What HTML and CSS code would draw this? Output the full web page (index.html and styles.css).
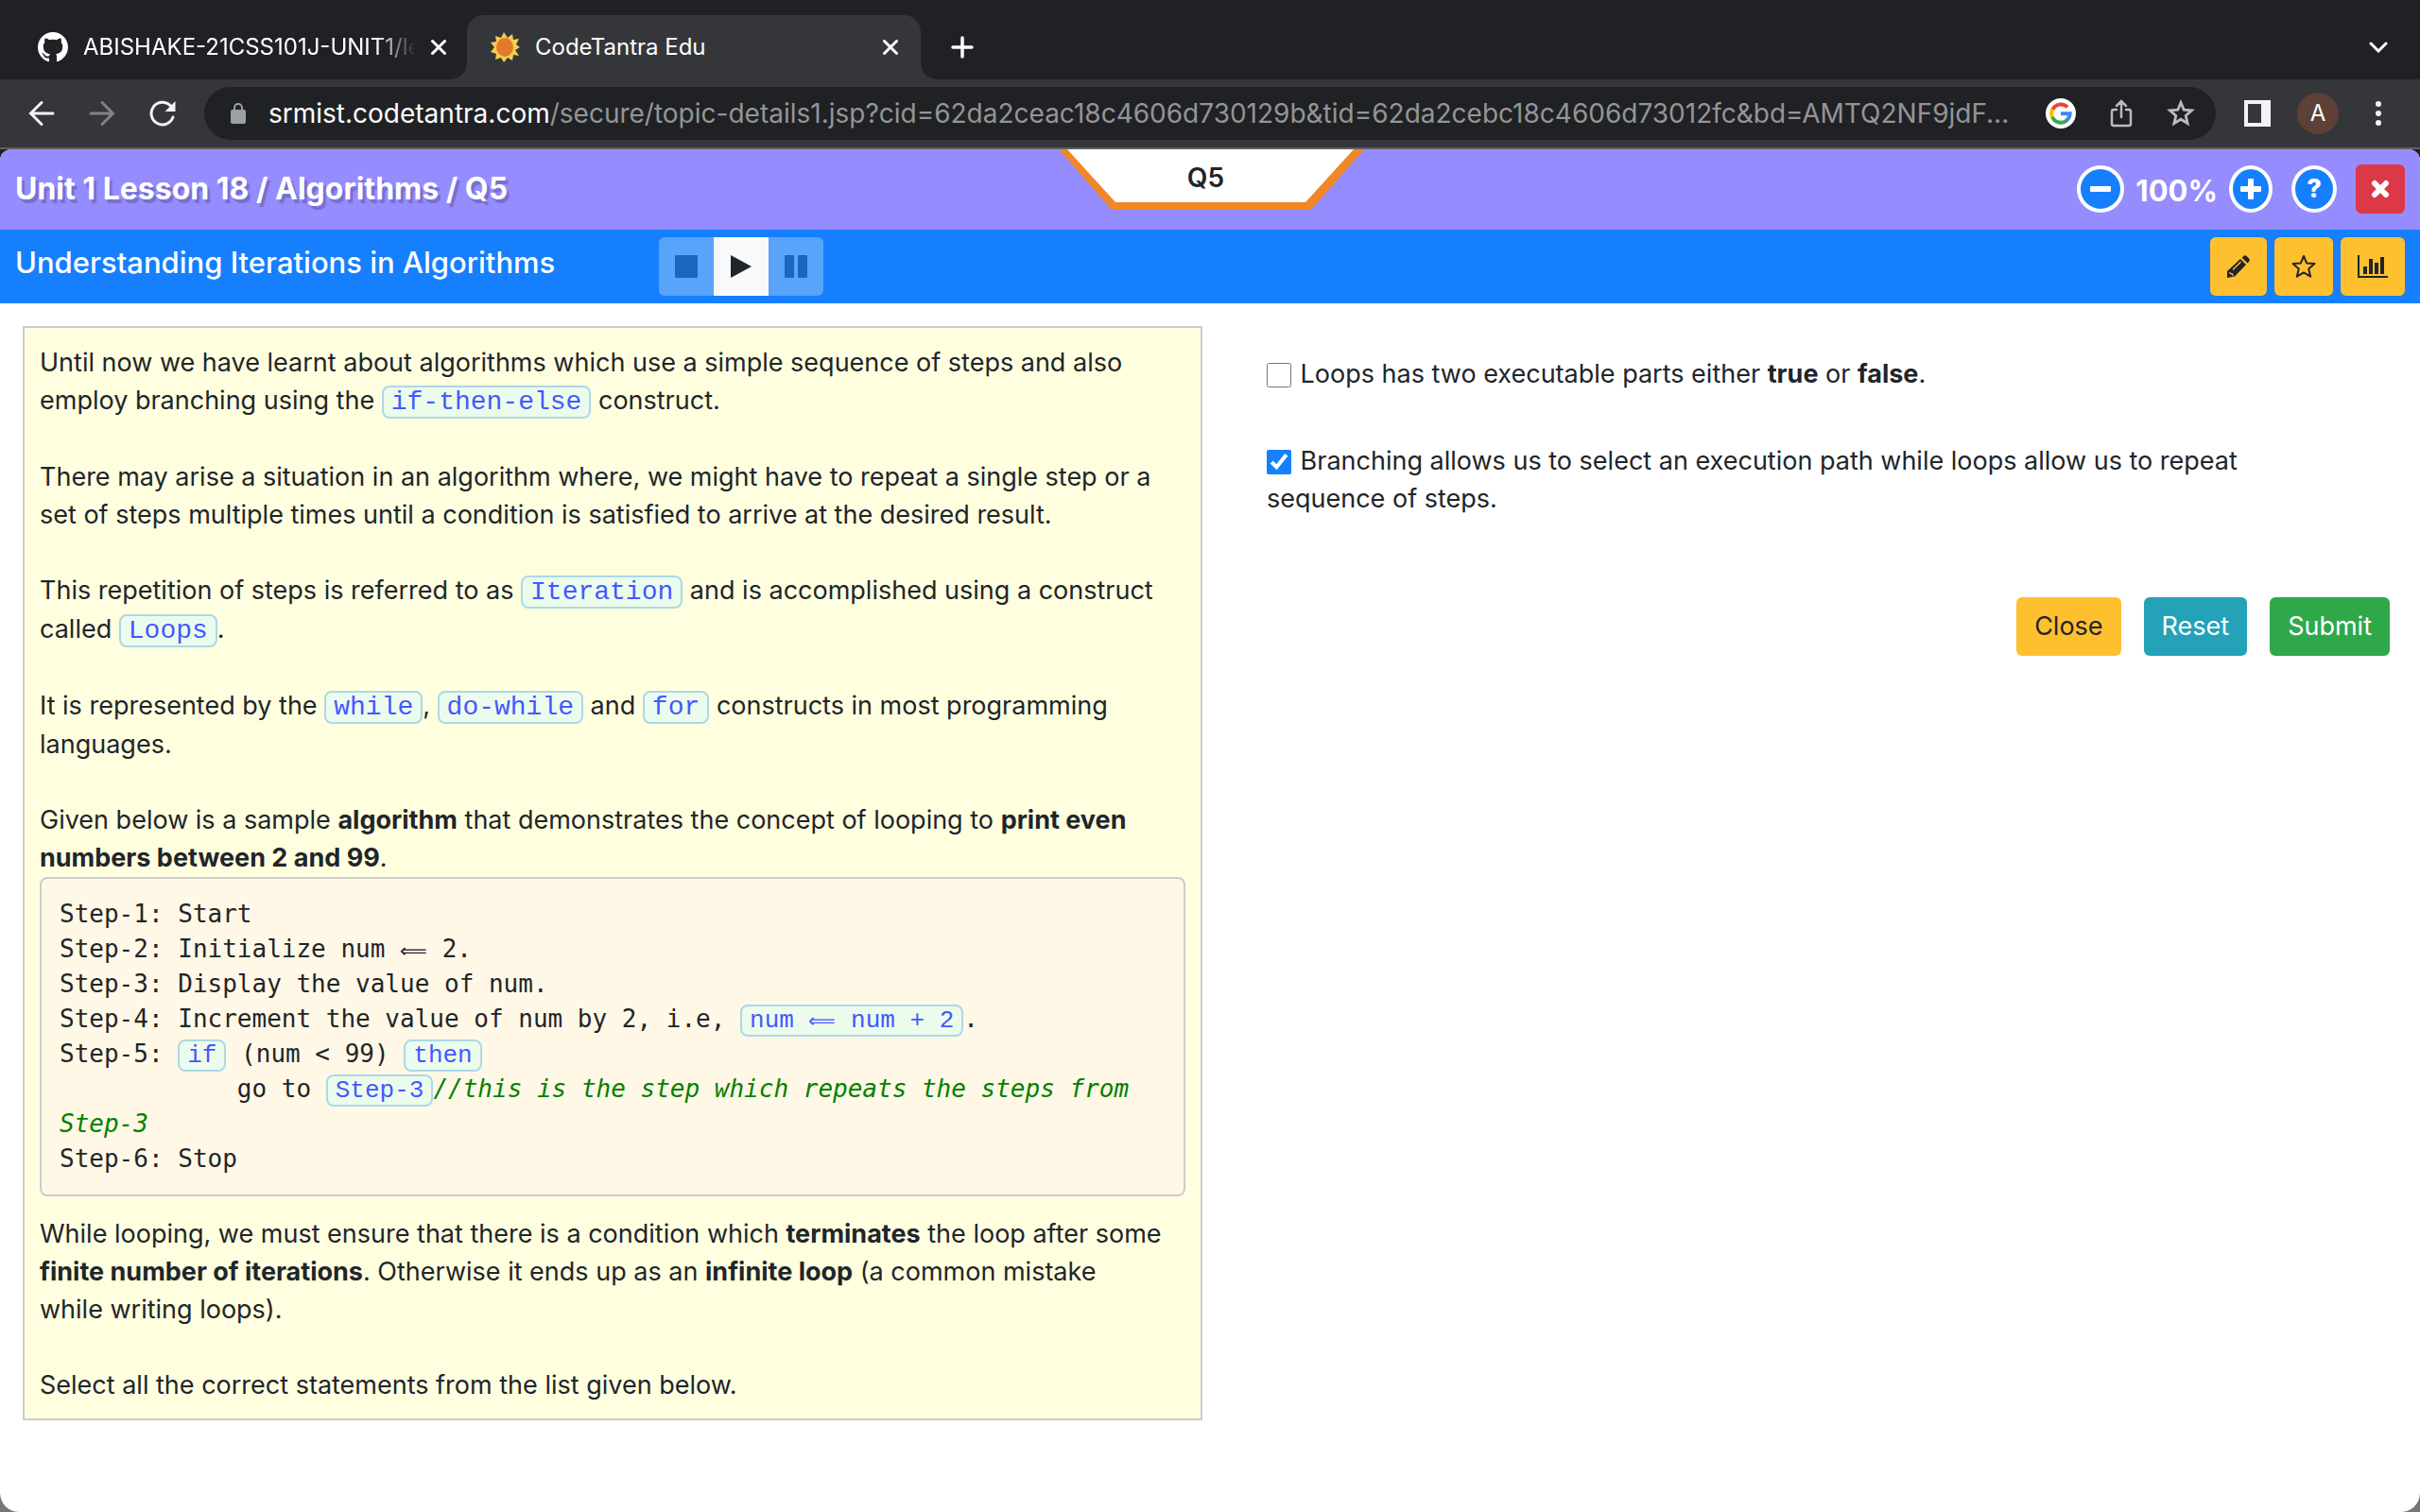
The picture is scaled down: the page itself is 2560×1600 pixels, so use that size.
FILE: index.html
```html
<!DOCTYPE html>
<html lang="en">
<head>
<meta charset="utf-8">
<title>CodeTantra Edu</title>
<link rel="stylesheet" href="styles.css">
</head>
<body>
<div class="window">
  <header class="browser">
    <nav class="tabs" aria-label="Tabs">
      <div class="tab">
        <svg class="favicon" viewBox="0 0 16 16" fill="#fff" aria-hidden="true"><path d="M8 0C3.58 0 0 3.58 0 8c0 3.54 2.29 6.53 5.47 7.59.4.07.55-.17.55-.38 0-.19-.01-.82-.01-1.49-2.01.37-2.53-.49-2.69-.94-.09-.23-.48-.94-.82-1.13-.28-.15-.68-.52-.01-.53.63-.01 1.08.58 1.23.82.72 1.21 1.87.87 2.33.66.07-.52.28-.87.51-1.07-1.78-.2-3.64-.89-3.64-3.95 0-.87.31-1.59.82-2.15-.08-.2-.36-1.02.08-2.12 0 0 .67-.21 2.2.82.64-.18 1.32-.27 2-.27s1.36.09 2 .27c1.53-1.04 2.2-.82 2.2-.82.44 1.1.16 1.92.08 2.12.51.56.82 1.27.82 2.15 0 3.07-1.87 3.75-3.65 3.95.29.25.54.73.54 1.48 0 1.07-.01 1.93-.01 2.2 0 .21.15.46.55.38A8.01 8.01 0 0 0 16 8c0-4.42-3.58-8-8-8z"/></svg>
        <span class="tab-title tab-title-faded">ABISHAKE-21CSS101J-UNIT1/le</span>
        <button class="icon-button" aria-label="Close tab"><svg width="16" height="16" viewBox="0 0 16 16" stroke="#fff" stroke-width="3" stroke-linecap="round"><path d="M1.500 1.500l13 13M14.500 1.500l-13 13"/></svg></button>
      </div>
      <div class="tab tab-active">
        <svg class="favicon" viewBox="0 0 32 32" aria-hidden="true"><path fill="#f3d04e" d="M15 0l4 6 5-4 1 6 6-1-3 6 4 3-5 3 4 6-6-1-1 6-5-3-4 5-3-5-6 2 1-6-6-2 4-5-4-5 6-1-1-6 6 2z"/><ellipse cx="16" cy="16" rx="9" ry="10" fill="#e5792b"/></svg>
        <span class="tab-title">CodeTantra Edu</span>
        <button class="icon-button" aria-label="Close tab"><svg width="16" height="16" viewBox="0 0 16 16" stroke="#fff" stroke-width="3" stroke-linecap="round"><path d="M1.500 1.500l13 13M14.500 1.500l-13 13"/></svg></button>
      </div>
      <button class="icon-button new-tab" aria-label="New tab"><svg width="24" height="24" viewBox="0 0 24 24" stroke="#fff" stroke-width="3.500" stroke-linecap="round"><path d="M12 2v20M2 12h20"/></svg></button>
      <button class="icon-button tab-search" aria-label="Search tabs"><svg width="20" height="12" viewBox="0 0 20 12" fill="none" stroke="#fff" stroke-width="3" stroke-linecap="round"><path d="M2 2l8 8 8-8"/></svg></button>
    </nav>
    <div class="toolbar">
      <div class="nav-buttons">
        <button class="icon-button" aria-label="Back"><svg width="28" height="28" viewBox="0 0 28 28" fill="none" stroke="#f1f3f4" stroke-width="3" stroke-linecap="round"><path d="M26 14H3M14 2.500L2.500 14 14 25.500"/></svg></button>
        <button class="icon-button" aria-label="Forward"><svg width="28" height="28" viewBox="0 0 28 28" fill="none" stroke="#828385" stroke-width="3" stroke-linecap="round"><path d="M2 14h23M14 2.500L25.500 14 14 25.500"/></svg></button>
        <button class="icon-button" aria-label="Reload"><svg width="28" height="28" viewBox="0 0 28 28"><path fill="none" stroke="#f1f3f4" stroke-width="3" stroke-linecap="round" d="M25 18A11.800 11.800 0 1 1 22 5.500"/><path fill="#f1f3f4" d="M27.500 1v11H16.500z"/></svg></button>
      </div>
      <div class="address">
        <svg width="16" height="22" viewBox="0 0 16 22" aria-hidden="true"><rect y="7" width="16" height="15" rx="2" fill="#9aa0a6"/><path d="M4 8V5a4 4 0 0 1 8 0v3" fill="none" stroke="#9aa0a6" stroke-width="2"/></svg>
        <span class="url"><span class="url-host">srmist.codetantra.com</span>/secure/topic-details1.jsp?cid=62da2ceac18c4606d730129b&amp;tid=62da2cebc18c4606d73012fc&amp;bd=AMTQ2NF9jdF...</span>
        <button class="icon-button" aria-label="Google"><svg width="32" height="32" viewBox="0 0 32 32" fill="none" stroke-width="4"><circle cx="16" cy="16" r="16" fill="#fff"/><path stroke="#ea4335" d="M7.300 12A9.700 9.700 0 0 1 23 9.400"/><path stroke="#fbbc05" d="M7.300 20.500a9.700 9.700 0 0 1 0-9"/><path stroke="#34a853" d="M7.200 20A9.700 9.700 0 0 0 22.600 23.200"/><path stroke="#4285f4" d="M16 16.200h9.700A9.700 9.700 0 0 1 22 23.500"/></svg></button>
        <button class="icon-button" aria-label="Share"><svg width="24" height="30" viewBox="0 0 24 30" fill="none" stroke="#bbb" stroke-width="2.500" stroke-linecap="round"><path d="M12 19V3M7 7l5-5 5 5M7 11H4a2 2 0 0 0-2 2v13a2 2 0 0 0 2 2h16a2 2 0 0 0 2-2V13a2 2 0 0 0-2-2h-3"/></svg></button>
        <button class="icon-button" aria-label="Bookmark"><svg width="30" height="30" viewBox="0 0 30 30" fill="none" stroke="#bbb" stroke-width="2.800"><path d="M15 3.500l3.200 7.700 8.300.7-6.300 5.500 1.900 8.100-7.100-4.300-7.100 4.300 1.900-8.100-6.300-5.500 8.300-.7z"/></svg></button>
      </div>
      <div class="toolbar-end">
        <button class="icon-button" aria-label="Side panel"><svg width="28" height="28" viewBox="0 0 28 28"><path fill="#f1f3f4" fill-rule="evenodd" d="M0 0h28v28H0zM4 4v20h14V4z"/></svg></button>
        <button class="avatar">A</button>
        <button class="icon-button" aria-label="Menu"><svg width="8" height="28" viewBox="0 0 8 28" fill="#f1f3f4"><circle cx="4" cy="4" r="3"/><circle cx="4" cy="14" r="3"/><circle cx="4" cy="24" r="3"/></svg></button>
      </div>
    </div>
  </header>

  <div class="page">
    <div class="lesson-bar">
      <h1 class="lesson-title">Unit 1 Lesson 18 / Algorithms / Q5</h1>
      <div class="question-tag">
        <svg width="323" height="64" viewBox="0 0 323 64" aria-hidden="true"><path fill="#f18825" d="M0 0h323l-56 64H56z"/><path fill="#fff" d="M9 0h303l-51 56H60z"/></svg>
        <span class="question-label">Q5</span>
      </div>
      <div class="lesson-tools">
        <button class="round" aria-label="Zoom out"><svg width="24" height="24" viewBox="0 0 24 24"><rect x="1" y="9" width="22" height="6" rx="1" fill="#fff"/></svg></button>
        <span class="zoom">100%</span>
        <button class="round round-plus" aria-label="Zoom in"><svg width="24" height="24" viewBox="0 0 24 24"><path fill="#fff" d="M10 1h4a1 1 0 0 1 1 1v7h7a1 1 0 0 1 1 1v4a1 1 0 0 1-1 1h-7v7a1 1 0 0 1-1 1h-4a1 1 0 0 1-1-1v-7H2a1 1 0 0 1-1-1v-4a1 1 0 0 1 1-1h7V2a1 1 0 0 1 1-1z"/></svg></button>
        <button class="round round-help">?</button>
        <button class="exit" aria-label="Exit"><svg width="20" height="20" viewBox="0 0 20 20" stroke="#fff" stroke-width="6" stroke-linecap="round"><path d="M4 4l12 12M16 4L4 16"/></svg></button>
      </div>
    </div>

    <div class="topic-bar">
      <h2 class="topic-title">Understanding Iterations in Algorithms</h2>
      <div class="player">
        <button disabled aria-label="Stop"><svg width="26" height="24" viewBox="0 0 26 24"><rect x="1" width="24" height="24" rx="1" fill="#1a66bd"/></svg></button>
        <button class="player-active" aria-label="Play"><svg width="24" height="24" viewBox="0 0 24 24"><path fill="#212529" d="M1 0l22 12L1 24z"/></svg></button>
        <button disabled aria-label="Pause"><svg width="26" height="24" viewBox="0 0 26 24" fill="#1a66bd"><rect x="1" width="10" height="24" rx="1"/><rect x="15" width="10" height="24" rx="1"/></svg></button>
      </div>
      <div class="topic-tools">
        <button class="tool" aria-label="Notes"><svg width="24" height="24" viewBox="0 0 24 24"><path fill="#212529" d="M17 1.500Q18.500-.5 20.500 1L23 3.500Q24.500 5 23 7l-1.500 1.500-6-6zM14 4l6 6L8 22.500 0 24v-7z"/><path stroke="#ffc02f" stroke-width="1.300" fill="none" d="M6 15.500l8.500-8.500M2.500 18l1 1.500 2 .5.500 2"/></svg></button>
        <button class="tool" aria-label="Favourite"><svg width="26" height="26" viewBox="0 0 26 26" fill="none" stroke="#212529" stroke-width="2" stroke-linejoin="round"><path d="M13 2l3.100 7.400 8.400.7-6.300 5.300 2 8.300L13 19.400l-7.200 4.300 2-8.300L1.500 10.100l8.400-.7z"/></svg></button>
        <button class="tool" aria-label="Statistics"><svg width="32" height="24" viewBox="0 0 32 24" fill="#212529"><path d="M0 0h2v22h30v2H0zM6 12h4v8H6zM12 4h4v16h-4zM18 8h4v12h-4zM24 2h4v18h-4z"/></svg></button>
      </div>
    </div>

    <main class="content">
      <article class="lesson">
        <p>Until now we have learnt about algorithms which use a simple sequence of steps and also employ branching using the <code>if-then-else</code> construct.</p>
        <p>There may arise a situation in an algorithm where, we might have to repeat a single step or a set of steps multiple times until a condition is satisfied to arrive at the desired result.</p>
        <p>This repetition of steps is referred to as <code>Iteration</code> and is accomplished using a construct called <code>Loops</code>.</p>
        <p>It is represented by the <code>while</code>, <code>do-while</code> and <code>for</code> constructs in most programming languages.</p>
        <p>Given below is a sample <b>algorithm</b> that demonstrates the concept of looping to <b>print even numbers between 2 and 99</b>.</p>
<pre class="steps">Step-1: Start
Step-2: Initialize num <span class="arrow">⟸</span> 2.
Step-3: Display the value of num.
Step-4: Increment the value of num by 2, i.e, <code>num <span class="arrow">⟸</span> num + 2</code>.
Step-5: <code>if</code> (num &lt; 99) <code>then</code>
            go to <code>Step-3</code><i>//this is the step which repeats the steps from Step-3</i>
Step-6: Stop</pre>
        <p>While looping, we must ensure that there is a condition which <b>terminates</b> the loop after some <b>finite number of iterations</b>. Otherwise it ends up as an <b>infinite loop</b> (a common mistake<br>while writing loops).</p>
        <p>Select all the correct statements from the list given below.</p>
      </article>
      <form class="answers">
        <label class="option"><input type="checkbox"> Loops has two executable parts either <b>true</b> or <b>false</b>.</label>
        <label class="option"><input type="checkbox" checked> Branching allows us to select an execution path while loops allow us to repeat sequence of steps.</label>
        <div class="actions">
          <button type="button" class="action action-close">Close</button>
          <button type="reset" class="action action-reset">Reset</button>
          <button type="button" class="action action-submit">Submit</button>
        </div>
      </form>
    </main>
  </div>
</div>
</body>
</html>
```
FILE: styles.css
```css
* { box-sizing: border-box; }

body {
  margin: 0;
  background: #777;
  color: #212529;
  font-family: Inter, "Liberation Sans", sans-serif;
  font-size: 27px;
  line-height: 40px;
}

button {
  border: 0;
  padding: 0;
  color: inherit;
  background: none;
  font: inherit;
}

svg { display: block; flex: none; }

.window {
  min-height: 100vh;
  display: flex;
  flex-direction: column;
  overflow: hidden;
  border-radius: 0 0 20px 20px;
  background: #202124;
}

.icon-button { display: flex; align-items: center; justify-content: center; flex: none; }

/* Tab strip */
.tabs {
  display: flex;
  align-items: center;
  height: 84px;
  padding: 16px 34px 0 14px;
  color: #fff;
  font-size: 24px;
}

.tab {
  position: relative;
  display: flex;
  align-items: center;
  width: 480px;
  height: 68px;
  padding: 0 22px 0 26px;
}

.tab-active {
  padding: 0 24px;
  border-radius: 18px 18px 0 0;
  background: #35363a;
}

.tab-active::before,
.tab-active::after {
  content: "";
  position: absolute;
  bottom: 0;
  width: 18px;
  height: 18px;
}

.tab-active::before { left: -18px; background: radial-gradient(circle at 0 0, transparent 18px, #35363a 18px); }
.tab-active::after { right: -18px; background: radial-gradient(circle at 100% 0, transparent 18px, #35363a 18px); }

.favicon { width: 32px; height: 32px; margin-right: 16px; }

.tab-title {
  flex: 1;
  overflow: hidden;
  white-space: nowrap;
}

.tab-title-faded {
  margin-right: 16px;
  mask-image: linear-gradient(to right, #000 88%, transparent);
}

.new-tab { margin-left: 32px; }
.tab-search { margin-left: auto; }

/* Toolbar */
.toolbar {
  display: flex;
  align-items: center;
  gap: 30px;
  height: 74px;
  padding: 0 40px 0 30px;
  border-bottom: 2px solid #5f6063;
  background: #35363a;
}

.nav-buttons { display: flex; gap: 36px; }

.address {
  flex: 1;
  display: flex;
  align-items: center;
  gap: 36px;
  min-width: 0;
  height: 56px;
  padding: 0 22px 0 28px;
  border-radius: 28px;
  background: #202124;
}

.url {
  flex: 1;
  margin-left: -12px;
  overflow: hidden;
  white-space: nowrap;
  color: #949597;
  font-size: 28px;
}

.url-host { color: #fff; }

.toolbar-end { display: flex; align-items: center; gap: 28px; }

.toolbar-end .icon-button:last-child { margin-left: 10px; }

.avatar {
  width: 44px;
  height: 44px;
  border-radius: 50%;
  color: #fff;
  background: #5d4037;
  font-size: 24px;
}

/* Page header */
.page {
  flex: 1;
  overflow: hidden;
  border-radius: 12px 12px 0 0;
  background: #fff;
}

.lesson-bar {
  position: relative;
  display: flex;
  align-items: center;
  justify-content: space-between;
  height: 85px;
  padding: 0 16px 2px;
  color: #fff;
  background: #958cff;
}

.lesson-title,
.topic-title { margin: 0; font-size: 31px; }

.lesson-title { font-size: 32px; font-weight: 700; text-shadow: 3px 4px 1px #766fd0; }

.question-tag {
  position: absolute;
  top: 0;
  left: 43.75%;
}

.question-label {
  position: absolute;
  inset: 0 12px 4px 0;
  display: flex;
  align-items: center;
  justify-content: center;
  color: #212529;
  font-size: 28px;
  font-weight: 600;
}

.lesson-tools { display: flex; align-items: center; }

.round {
  display: flex;
  align-items: center;
  justify-content: center;
  width: 50px;
  height: 50px;
  border: 4px solid #fff;
  border-radius: 50%;
  color: #fff;
  background: #157ffe;
}

.round-plus { width: 46px; }
.round-help { width: 48px; margin-left: 20px; font-weight: 800; }

.zoom {
  margin: 4px 12px 0;
  font-size: 31px;
  font-weight: 700;
}

.exit {
  display: flex;
  align-items: center;
  justify-content: center;
  width: 52px;
  height: 52px;
  margin-left: 20px;
  border-radius: 6px;
  background: #dc3848;
}

.topic-bar {
  display: flex;
  align-items: center;
  height: 78px;
  padding: 0 16px;
  color: #fff;
  background: #157ffe;
}

.topic-title { width: 681px; padding-bottom: 8px; font-weight: 500; }

.player {
  display: flex;
  overflow: hidden;
  height: 62px;
  border-radius: 6px;
  background: #59a3fb;
}

.player button {
  display: flex;
  align-items: center;
  justify-content: center;
  width: 58px;
}

.player .player-active { background: #f8f9fa; }

.topic-tools { display: flex; gap: 8px; margin-left: auto; }

.tool {
  height: 62px;
  padding: 0 18px;
  border-radius: 6px;
  background: #ffc02f;
}

/* Lesson and answers */
.content {
  display: grid;
  grid-template-columns: 1248fr 1188fr;
  align-items: start;
  gap: 68px;
  padding: 24px 32px 24px 24px;
}

.lesson {
  padding: 17px 16px 15px;
  border: 2px solid #ccc;
  background: #ffffe0;
}

.lesson p { margin: 0 0 40px; }
.lesson p:has(+ pre),
.lesson p:last-child { margin-bottom: 0; }

code {
  padding: 0 8px;
  border: 2px solid #add8e6;
  border-radius: 8px;
  color: #4458ff;
  background: #ebfcec;
  font-family: "Liberation Mono", monospace;
  font-size: 28px;
  line-height: 38px;
}

.steps {
  margin: 0 0 20px;
  padding: 19px;
  border: 2px solid #ccc;
  border-radius: 8px;
  background: #fff8e6;
  font-family: "DejaVu Sans Mono", monospace;
  font-size: 26px;
  line-height: 37px;
  white-space: pre-wrap;
}

.steps code { font-size: 26px; line-height: 32px; }
.steps i { color: #008000; }
.arrow { font-size: 20px; line-height: 24px; }

.answers { padding-top: 31px; }

.option { display: block; margin-bottom: 52px; padding-right: 60px; }

.option input {
  width: 26px;
  height: 26px;
  margin: 0 2px 0 0;
  vertical-align: -5px;
  accent-color: #157ffe;
}

.actions {
  display: flex;
  justify-content: flex-end;
  gap: 24px;
  padding-top: 32px;
}

.action {
  height: 62px;
  padding: 0 19px;
  border-radius: 6px;
  color: #fff;
}

.action-close { color: #212529; background: #ffc02f; }
.action-reset { background: #24a2b8; }
.action-submit { background: #2fa84a; }
```
